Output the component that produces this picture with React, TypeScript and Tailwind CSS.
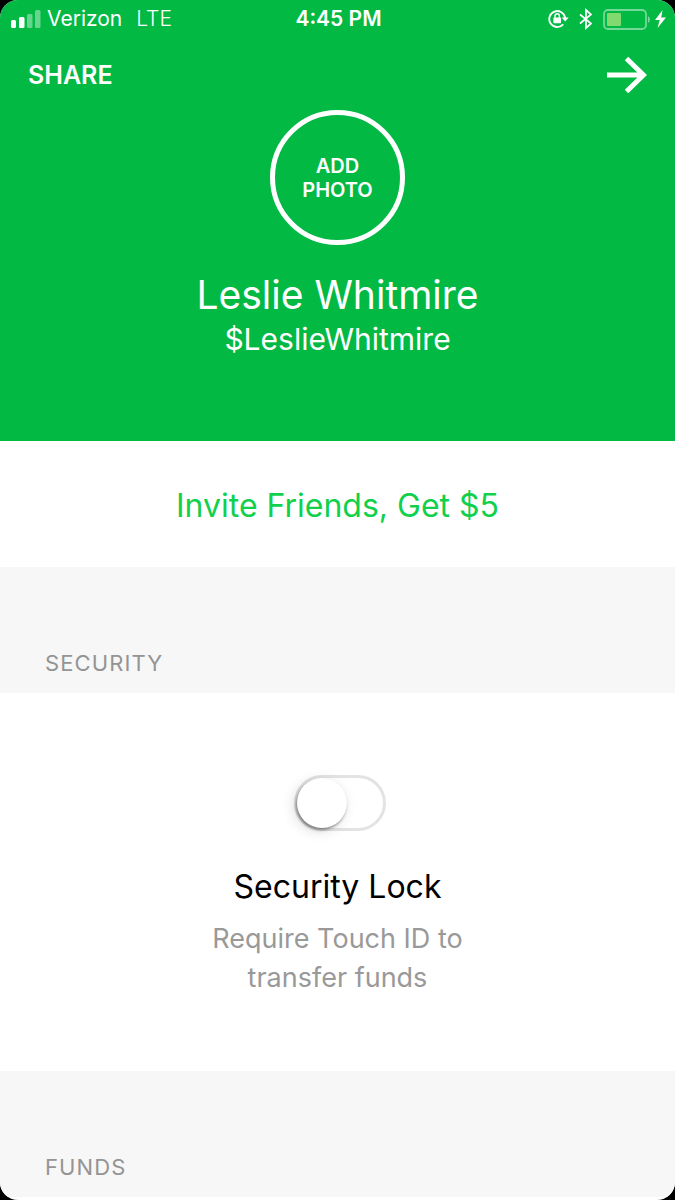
import { useState } from "react";

function SignalIcon() {
  return (
    <svg width="30" height="18" viewBox="0 0 30 18" fill="#fff" aria-hidden="true">
      <rect x="0" y="10" width="5" height="8" rx="1.5" />
      <rect x="8" y="7" width="5.5" height="11" rx="1.5" />
      <rect x="16" y="4" width="5.5" height="14" rx="1.5" opacity="0.4" />
      <rect x="24" y="0" width="5.5" height="18" rx="1.5" opacity="0.4" />
    </svg>
  );
}

function RotationLockIcon() {
  return (
    <svg width="21" height="20" viewBox="0 0 21 20" fill="none" aria-hidden="true">
      <path
        d="M15.2 15.4A8 8 0 1 1 17.2 9"
        stroke="#fff"
        strokeWidth="1.8"
      />
      <path d="M13.7 8.4h7L17.2 12.6Z" fill="#fff" />
      <rect x="5.4" y="8.6" width="7.6" height="5.6" rx="0.8" fill="#fff" />
      <path d="M7 9V7a2.2 2.2 0 0 1 4.400 0v2" stroke="#fff" strokeWidth="1.4" />
    </svg>
  );
}

function BluetoothIcon() {
  return (
    <svg width="14" height="22" viewBox="0 0 14 22" fill="none" aria-hidden="true">
      <path
        d="M1 6.5 12 15.5 7 20V2l5 4.5L1 15.5"
        stroke="#fff"
        strokeWidth="1.7"
      />
    </svg>
  );
}

function BatteryIcon() {
  return (
    <svg width="48" height="21" viewBox="0 0 48 21" fill="none" aria-hidden="true">
      <rect x="1" y="1" width="42" height="19" rx="4" stroke="#fff" strokeWidth="1.8" opacity="0.45" />
      <path d="M45 7.2c2.6.8 2.6 5.8 0 6.6Z" fill="#fff" opacity="0.45" />
      <rect x="4" y="4" width="14" height="13" rx="1" fill="#82d96f" />
    </svg>
  );
}

function BoltIcon() {
  return (
    <svg width="11" height="18" viewBox="0 0 11 18" fill="#fff" aria-hidden="true">
      <path d="M7.6 0 0 10h4.6L2.6 18 11 7.4H6.2Z" />
    </svg>
  );
}

function ArrowIcon() {
  return (
    <svg width="40" height="38" viewBox="0 0 40 38" fill="none" aria-hidden="true">
      <path d="M0 19h36M19.500 2.500 36.500 19 19.500 35.500" stroke="#fff" strokeWidth="5" />
    </svg>
  );
}

function StatusBar() {
  return (
    <div className="grid grid-cols-3 items-center pt-[5px] pr-[9px] pl-[11px] text-[21px] leading-7">
      <div className="flex items-center gap-1.5">
        <SignalIcon />
        <span>Verizon</span>
        <span className="ml-2 font-light">LTE</span>
      </div>
      <span className="text-center font-semibold">4:45 PM</span>
      <div className="flex items-center justify-end">
        <RotationLockIcon />
        <span className="ml-2.5">
          <BluetoothIcon />
        </span>
        <span className="ml-2.5">
          <BatteryIcon />
        </span>
        <span className="ml-1">
          <BoltIcon />
        </span>
      </div>
    </div>
  );
}

function SectionHeading({ title }: { title: string }) {
  return (
    <div className="bg-[#f7f7f7] px-[45px] pt-20 pb-3.5">
      <h2 className="text-[22px] leading-8 tracking-wider text-[#949494]">
        {title}
      </h2>
    </div>
  );
}

export default function App() {
  const [isLocked, setIsLocked] = useState(false);

  return (
    <div className="min-h-screen bg-black font-['Inter',sans-serif]">
      <main className="min-h-screen overflow-hidden rounded-[18px] bg-white">
        <header className="bg-[#02b944] pb-[82px] text-white">
          <StatusBar />
          <nav className="flex items-center justify-between px-7 pt-[23px]">
            <button type="button" className="text-[25px] leading-9 font-semibold">
              SHARE
            </button>
            <button type="button" aria-label="Continue">
              <ArrowIcon />
            </button>
          </nav>
          <div className="flex flex-col items-center pt-4">
            <button
              type="button"
              className="size-[135px] rounded-full border-5 border-white text-xl leading-6 font-semibold"
            >
              ADD
              <br />
              PHOTO
            </button>
            <h1 className="pt-[26px] text-[39px] leading-12">Leslie Whitmire</h1>
            <p className="text-[30px] leading-10">$LeslieWhitmire</p>
          </div>
        </header>

        <a
          href="#invite"
          className="block pt-[42px] pb-[38px] text-center text-[32px] leading-[46px] text-[#10d04c]"
        >
          Invite Friends, Get $5
        </a>

        <SectionHeading title="SECURITY" />
        <section className="flex flex-col items-center px-11 pt-[82px] pb-[74px] text-center">
          <input
            id="security-lock"
            type="checkbox"
            role="switch"
            checked={isLocked}
            onChange={(event) => setIsLocked(event.target.checked)}
            aria-describedby="security-lock-hint"
            className="ml-1 h-14 w-[92px] cursor-pointer appearance-none rounded-full border-3 border-[#e3e3e3] bg-white transition before:block before:size-[50px] before:rounded-full before:bg-white before:shadow-[-1px_2px_3px_rgba(0,0,0,0.4),-3px_3px_14px_rgba(0,0,0,0.14)] before:transition checked:border-[#02b944] checked:bg-[#02b944] checked:before:translate-x-9"
          />
          <label
            htmlFor="security-lock"
            className="pt-9 text-[32px] leading-10 text-black"
          >
            Security Lock
          </label>
          <p
            id="security-lock-hint"
            className="w-72 pt-3 text-[27px] leading-[39px] text-[#999]"
          >
            Require Touch ID to transfer funds
          </p>
        </section>

        <SectionHeading title="FUNDS" />
      </main>
    </div>
  );
}
